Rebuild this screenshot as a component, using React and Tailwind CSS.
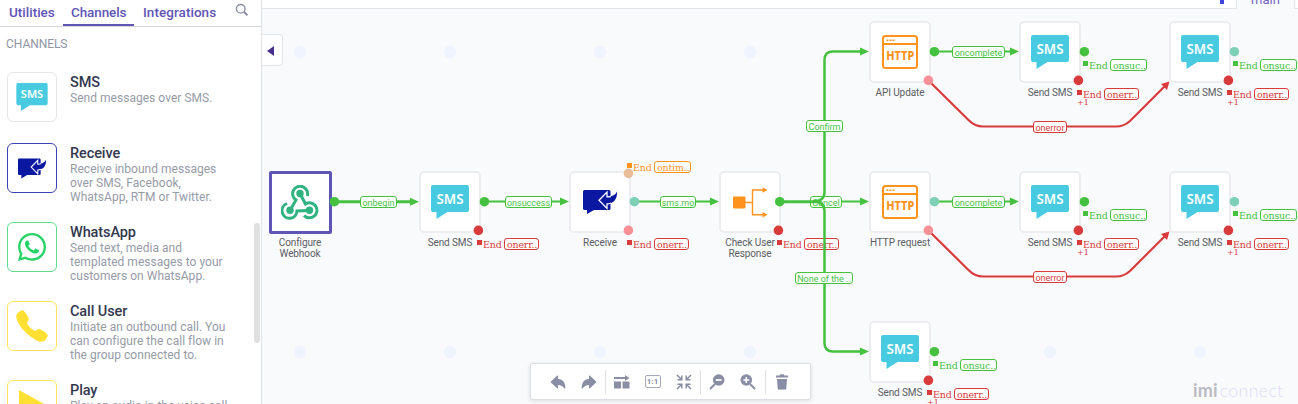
import React from "react";
import { FaWhatsapp } from "react-icons/fa";
import { IoCall, IoArrowUndo, IoArrowRedo } from "react-icons/io5";

const OX = 262;
const GREEN = "#45c13f";
const RED = "#d93a3c";

function SmsIcon({ className }) {
  return (
    <svg viewBox="0 0 38 34" className={className}>
      <path d="M2 0H36a2 2 0 0 1 2 2V25a2 2 0 0 1-2 2H16.500L5.500 34V27H2a2 2 0 0 1-2-2V2a2 2 0 0 1 2-2z" fill="#48cbe1" />
      <text x="19" y="18.700" textAnchor="middle" fontFamily="'Noto Sans', sans-serif" fontWeight="600" fontSize="14" textLength="27" lengthAdjust="spacingAndGlyphs" fill="#fff">SMS</text>
    </svg>
  );
}

function ReceiveIcon({ className }) {
  return (
    <svg viewBox="0 0 34 24" className={className}>
      <path d="M1.500 0H26a1.500 1.500 0 0 1 1.500 1.500V18.500a1.500 1.500 0 0 1-1.500 1.500H11L4 24V20H1.500A1.500 1.500 0 0 1 0 18.500V1.500A1.500 1.500 0 0 1 1.500 0z" fill="#0a17a0" />
      <path d="M16 10.300L24 2V6.800C28.500 6.800 32.500 5.300 34 1.500C34.500 9 30.500 13.500 24 14V18.500Z" fill="#0a17a0" />
      <path d="M28 6.300Q26 6.900 24 6.800V2L16 10.300L24 18.500V14Q26 13.900 28 13" fill="none" stroke="#fff" strokeWidth="1.300" />
    </svg>
  );
}

function HttpIcon() {
  return (
    <svg viewBox="0 0 36 34" className="h-[34px] w-[36px]">
      <rect x="1" y="1" width="34" height="32" rx="2.500" fill="#fff" stroke="#ff931e" strokeWidth="2" />
      <path d="M1 9H35" stroke="#ff931e" strokeWidth="2" />
      <path d="M4.500 5.200h2M7.500 5.200h2M10.500 5.200h2" stroke="#ff931e" strokeWidth="1.500" />
      <text x="18.200" y="25.200" textAnchor="middle" fontFamily="'Noto Sans', sans-serif" fontWeight="800" fontSize="11.500" textLength="28" lengthAdjust="spacingAndGlyphs" fill="#ff931e">HTTP</text>
    </svg>
  );
}

function BranchIcon() {
  return (
    <svg viewBox="0 0 35 31" className="h-[31px] w-[35px]">
      <rect x="0" y="9.500" width="12.500" height="12" rx="1" fill="#ff931e" />
      <path d="M12 15.500H19.500M31 3H19.500V27.700H31" fill="none" stroke="#ff931e" strokeWidth="1.400" />
      <path d="M29.500 0.300L34.500 3L29.500 5.700zM29.500 25L34.500 27.700L29.500 30.400z" fill="#ff931e" />
    </svg>
  );
}

function WebhookIcon() {
  return (
    <svg viewBox="281 185 38 35" className="h-[35px] w-[38px]" fill="none" stroke="#2fb380" strokeWidth="3">
      <circle cx="300" cy="193.500" r="3.700" fill="#2fb380" stroke="none" />
      <circle cx="290" cy="210.300" r="3.700" fill="#2fb380" stroke="none" />
      <circle cx="309.500" cy="210.300" r="3.700" fill="#2fb380" stroke="none" />
      <path d="M307.300 196A7.500 7.500 0 1 0 296 200L290.500 209.500" />
      <path d="M300 193.500L305.500 204A7.500 7.500 0 1 1 304 215.500" />
      <path d="M287 203.600A7.500 7.500 0 1 0 297 211L309 210.500" />
    </svg>
  );
}

const CHANNELS = [
  { title: "SMS", lines: ["Send messages over SMS."], border: "border-[#e6e6ea]", h: "h-[71px]", icon: <SmsIcon className="h-[28px] w-[32px]" /> },
  { title: "Receive", lines: ["Receive inbound messages", "over SMS, Facebook,", "WhatsApp, RTM or Twitter."], border: "border-[#3a44b4]", h: "h-[79px]", icon: <ReceiveIcon className="h-[21px] w-[28px]" /> },
  { title: "WhatsApp", lines: ["Send text, media and", "templated messages to your", "customers on WhatsApp."], border: "border-[#5fdc8b]", h: "h-[79px]", icon: <FaWhatsapp className="size-[32px] text-[#25d366]" /> },
  { title: "Call User", lines: ["Initiate an outbound call. You", "can configure the call flow in", "the group connected to."], border: "border-[#ffe45c]", h: "h-[79px]", icon: <IoCall className="size-[36px] text-[#ffe033]" /> },
  { title: "Play", lines: ["Play an audio in the voice call"], border: "border-[#ffe45c]", h: "h-[79px]", icon: <svg viewBox="0 0 27 30" className="h-[30px] w-[27px]"><path d="M0 0L27 15L0 30z" fill="#ffe033" /></svg> },
];

function Sidebar() {
  return (
    <aside className="relative flex h-[404px] w-[262px] shrink-0 flex-col overflow-hidden border-r border-[#e1e2e8] bg-white">
      <div className="flex h-[27px] shrink-0 border-b border-[#d5d6dc] text-[13.500px] leading-[25px] font-medium text-[#5f55b5]">
        <span className="w-[63px] pl-[9px]">Utilities</span>
        <span className="w-[71px] border-b-2 border-[#5f55b5] pl-[8px] tracking-[-0.100px]">Channels</span>
        <span className="w-[101px] pl-[9px] tracking-[0.050px]">Integrations</span>
        <svg viewBox="0 0 14 14" className="mt-[3px] size-[14px]" fill="none" stroke="#8a8ea5">
          <circle cx="5.700" cy="5.800" r="4.300" strokeWidth="1.400" />
          <path d="M9 9L12.500 12.300" strokeWidth="2" />
        </svg>
      </div>
      <div className="mt-[9px] h-[36px] shrink-0 pl-[6px] text-[12px] leading-[17px] tracking-[-0.050px] text-[#9195a3]">CHANNELS</div>
      {CHANNELS.map((c) => (
        <div key={c.title} className={`flex shrink-0 pl-[7px] ${c.h}`}>
          <div className={`flex size-[50px] shrink-0 items-center justify-center rounded-[6px] border ${c.border}`}>{c.icon}</div>
          <div className="ml-[13px] whitespace-nowrap">
            <div className="h-[19px] text-[14.500px] leading-[22px] font-medium tracking-[-0.100px] text-[#343850]">{c.title}</div>
            {c.lines.map((l) => (
              <div key={l} className="text-[12px] leading-[14px] tracking-[0.030px] text-[#979ba8]">{l}</div>
            ))}
          </div>
        </div>
      ))}
      <div className="absolute top-[223px] left-[254px] h-[120px] w-[6px] rounded-full bg-[#e0e0e0]" />
    </aside>
  );
}

const ICONS = {
  sms: <SmsIcon className="h-[34px] w-[38px]" />,
  receive: <ReceiveIcon className="h-[24px] w-[34px]" />,
  http: <HttpIcon />,
  branch: <BranchIcon />,
  hook: <WebhookIcon />,
};

const NODES = [
  { x: 300, y: 202, icon: "hook", label: ["Configure", "Webhook"], selected: true },
  { x: 450, y: 202, icon: "sms", label: ["Send SMS"] },
  { x: 600, y: 202, icon: "receive", label: ["Receive"] },
  { x: 750, y: 202, icon: "branch", label: ["Check User", "Response"] },
  { x: 900, y: 52, icon: "http", label: ["API Update"] },
  { x: 900, y: 202, icon: "http", label: ["HTTP request"] },
  { x: 900, y: 352, icon: "sms", label: ["Send SMS"] },
  { x: 1050, y: 52, icon: "sms", label: ["Send SMS"] },
  { x: 1200, y: 52, icon: "sms", label: ["Send SMS"] },
  { x: 1050, y: 202, icon: "sms", label: ["Send SMS"] },
  { x: 1200, y: 202, icon: "sms", label: ["Send SMS"] },
];

const DOTS = [
  [334.4, 201.700, GREEN], [484.4, 201.700, GREEN], [478.4, 230.400, RED],
  [628.4, 173.400, "#e8bd98"], [634.4, 201.700, "#7dd0b6"], [628.4, 230.400, "#fb9196"],
  [779.7, 201.700, GREEN], [778.4, 230.400, RED],
  [934.4, 51.700, GREEN], [928.4, 80.400, "#fb9196"],
  [934.4, 201.700, "#7dd0b6"], [928.4, 230.400, "#fb9196"],
  [934.4, 351.700, GREEN], [928.4, 380.400, RED],
  [1084.4, 51.700, GREEN], [1078.4, 80.400, RED], [1234.4, 51.700, "#7dd0b6"], [1228.4, 80.400, RED],
  [1084.4, 201.700, GREEN], [1078.4, 230.400, RED], [1234.4, 201.700, "#7dd0b6"], [1228.4, 230.400, RED],
];

const ENDS = [
  [477, 238, "red"], [627, 161, "orange"], [627, 238, "red"], [777, 238, "red"],
  [1083, 59, "green"], [1077, 88, "red", true], [1233, 59, "green"], [1227, 88, "red", true],
  [1083, 209, "green"], [1077, 238, "red", true], [1233, 209, "green"], [1227, 238, "red", true],
  [933, 359, "green"], [927, 388, "red", true],
];

const END_STYLE = {
  red: { text: "text-[#d93a3c]", fill: "bg-[#d93a3c]", pill: "w-[35px] border-[#d93a3c]", label: "onerr.." },
  green: { text: "text-[#45c13f]", fill: "bg-[#45c13f]", pill: "w-[37px] border-[#45c13f]", label: "onsuc.." },
  orange: { text: "text-[#ff931e]", fill: "bg-[#ff931e]", pill: "w-[37px] border-[#ff931e]", label: "ontim.." },
};

function EndTag({ x, y, kind, more }) {
  const s = END_STYLE[kind];
  return (
    <div className={`absolute flex h-[12px] font-['DejaVu_Serif',serif] text-[9.500px] leading-[12px] whitespace-nowrap ${s.text}`} style={{ left: x - OX, top: y }}>
      <span className={`mt-[2px] size-[5px] shrink-0 ${s.fill}`} />
      <span className="mt-px ml-px w-[21px] shrink-0 leading-[11px] tracking-[-0.200px]">End</span>
      <span className={`h-[12px] shrink-0 rounded-[3px] border bg-white pl-[2px] leading-[11px] tracking-[-0.200px] ${s.pill}`}>{s.label}</span>
      {more && <span className="absolute top-[10px] left-0 text-[8px] leading-[9px]">+1</span>}
    </div>
  );
}

const LABELS = [
  [360, 196, 37, "onbegin"], [505, 196, 47, "onsuccess"], [660, 196, 36, "sms.mo"],
  [806, 120, 37, "Confirm"], [795, 272, 58, "None of the .."],
  [952, 46, 53, "oncomplete"], [952, 196, 53, "oncomplete"],
  [1033, 121, 34, "onerror", true], [1033, 271, 34, "onerror", true],
];

function EdgeLabel({ x, y, w, text, error }) {
  return (
    <div
      className={`absolute flex h-[12px] justify-center rounded-[3px] border bg-white text-[9px] leading-[12px] whitespace-nowrap ${error ? "border-[#d93a3c] text-[#d93a3c]" : "border-[#45c13f] text-[#45c13f]"}`}
      style={{ left: x - OX, top: y, width: w }}
    >
      {text}
    </div>
  );
}

function Arrow({ x, y }) {
  return <path d={`M${x - 9} ${y - 4}L${x} ${y}L${x - 9} ${y + 4}z`} fill={GREEN} />;
}

function ErrorEdge({ dy }) {
  return (
    <g transform={`translate(0 ${dy})`}>
      <path d="M929 81L969 120.500Q975 126.500 983 126.500H1116Q1124 126.500 1130 121L1165 86" fill="none" stroke={RED} strokeWidth="2.200" />
      <path d="M1169.500 81.500L1167 90L1161 84z" fill={RED} />
    </g>
  );
}

function Layer({ children }) {
  return <svg viewBox="262 0 1036 404" className="pointer-events-none absolute inset-0 h-[404px] w-[1036px]">{children}</svg>;
}

function NodeCard({ n }) {
  return (
    <div className="absolute flex w-[76px] flex-col items-center" style={{ left: n.x - OX - 38, top: n.y - 31 }}>
      {n.selected ? (
        <div className="flex size-[63px] items-center justify-center rounded-[2px] border-3 border-[#5f55b5] bg-white">{ICONS[n.icon]}</div>
      ) : (
        <div className="flex size-[62px] items-center justify-center rounded-[5px] border-2 border-[#ededf0] bg-white">{ICONS[n.icon]}</div>
      )}
      <div className="absolute top-[66px] text-center text-[10px] leading-[11px] tracking-[-0.100px] whitespace-nowrap text-[#5b5d63]">
        {n.label.map((l) => <div key={l}>{l}</div>)}
      </div>
    </div>
  );
}

function Toolbar() {
  const sep = <span className="ml-px h-[24px] w-px bg-[#dfe0e6]" />;
  const cell = "flex w-[31px] justify-center";
  return (
    <div className="absolute top-[363px] left-[268px] flex h-[37px] w-[281px] items-center rounded-[2px] border border-[#dedfe5] bg-white pl-[11px] text-[#8a8ea5] shadow-[0_1px_4px_rgba(0,0,0,0.12)]">
      <span className={cell}><IoArrowUndo className="size-[18px]" /></span>
      <span className={cell}><IoArrowRedo className="size-[18px]" /></span>
      {sep}
      <span className={cell}>
        <svg viewBox="0 0 16 14" className="h-[14px] w-[16px]" fill="currentColor"><path d="M0 2.100H11V0L15.500 3L11 6V3.900H0zM0 6.500H7V13.500H0zM8.500 6.500H15.500V13.500H8.500z" /></svg>
      </span>
      <span className={cell}>
        <span className="h-[13px] w-[16px] rounded-[2px] border border-[#a5a8ba] text-center text-[8px] leading-[11px] font-bold">1:1</span>
      </span>
      <span className={cell}>
        <svg viewBox="0 0 16 16" className="size-[16px]" fill="none" stroke="currentColor" strokeWidth="1.500">
          <path d="M1 1L5.500 5.500M1.500 5.800H5.800V1.500M15 1L10.500 5.500M14.500 5.800H10.200V1.500M1 15L5.500 10.500M1.500 10.200H5.800V14.500M15 15L10.500 10.500M14.500 10.200H10.200V14.500" />
        </svg>
      </span>
      {sep}
      <span className={cell}>
        <svg viewBox="0 0 16 16" className="size-[16px]"><circle cx="9.700" cy="6" r="5.800" fill="currentColor" /><path d="M6 10L1 15" stroke="currentColor" strokeWidth="2" /><path d="M6.800 6H12.600" stroke="#fff" strokeWidth="1.700" /></svg>
      </span>
      <span className={cell}>
        <svg viewBox="0 0 16 16" className="size-[16px]"><circle cx="6.300" cy="6" r="5.800" fill="currentColor" /><path d="M10 10L15 15" stroke="currentColor" strokeWidth="2" /><path d="M3.400 6H9.200M6.300 3.100V8.900" stroke="#fff" strokeWidth="1.500" /></svg>
      </span>
      <span className="w-px" />
      {sep}
      <span className={cell}>
        <svg viewBox="0 0 14 16" className="h-[16px] w-[14px]" fill="currentColor"><path d="M1 1.500H4.500L5.500 0.300H8.500L9.500 1.500H13V3.500H1zM2 5H12L11.200 15.500H2.800z" /></svg>
      </span>
    </div>
  );
}

function Canvas() {
  return (
    <main className="relative h-[404px] flex-1 overflow-hidden bg-[#f9fafc]">
      <div className="flex h-[9px] text-[13px] text-[#7468c0]">
        <div className="flex-1 border-b border-[#e4e5e9] bg-white">
          <div className="ml-[958px] h-[4px] w-[4px] bg-[#3a46dd]" />
        </div>
        <div className="h-[9px] w-[59px] border-x border-[#e4e5e9] text-center leading-[0px]">main</div>
        <div className="w-[3px] border-b border-[#e4e5e9] bg-white" />
      </div>
      <Layer>
        {[52, 352].map((y) => [300, 450, 600, 750, 900, 1050, 1200].map((x) => <circle key={`${x}-${y}`} cx={x} cy={y} r="6.300" fill="#f0f4fe" />))}
      </Layer>
      <div className="absolute top-[34px] left-[-1px] flex h-[32px] w-[22px] items-center rounded-r-[4px] border border-l-0 border-[#e4e5e9] bg-white">
        <svg viewBox="0 0 7 10" className="mt-px ml-[6px] h-[10px] w-[7px]"><path d="M7 0V10L0 5z" fill="#472f8a" /></svg>
      </div>
      {NODES.map((n) => <NodeCard key={`${n.x}-${n.y}`} n={n} />)}
      {ENDS.map(([x, y, kind, more]) => <EndTag key={`${x}-${y}`} x={x} y={y} kind={kind} more={more} />)}
      <Layer>
        <path d="M820 201.500H862" stroke={GREEN} strokeWidth="2" />
      </Layer>
      <EdgeLabel x={810} y={196} w={32} text="Cancel" />
      <Layer>
        <g fill="none" stroke={GREEN} strokeWidth="2">
          <path d="M334 201.700H412" strokeWidth="3" />
          <path d="M484 201.500H562M634 201.500H712M934 51.500H1012M934 201.500H1012" />
          <path d="M780 201.700H820" strokeWidth="3" />
          <path d="M813 201.500Q824.500 201.500 824.500 192V60Q824.500 51.500 833 51.500H862" strokeWidth="2.500" />
          <path d="M813 201.500Q824.500 201.500 824.500 211V343Q824.500 351.500 833 351.500H862" strokeWidth="2.500" />
        </g>
        {[[419, 201.7], [569, 201.5], [719, 201.5], [869, 51.5], [869, 201.5], [869, 351.5], [1019, 51.5], [1019, 201.5]].map(([x, y]) => <Arrow key={`${x}-${y}`} x={x} y={y} />)}
        <ErrorEdge dy={0} />
        <ErrorEdge dy={150} />
        {DOTS.map(([x, y, c]) => <circle key={`${x}-${y}`} cx={x} cy={y} r="4.800" fill={c} />)}
      </Layer>
      {LABELS.map(([x, y, w, text, error]) => <EdgeLabel key={`${x}-${y}`} x={x} y={y} w={w} text={text} error={error} />)}
      <Toolbar />
      <div className="absolute top-[380px] left-[931px] flex items-baseline font-['Lato',sans-serif] leading-[20px] whitespace-nowrap">
        <span className="text-[18px] font-bold tracking-[0.200px] text-[#b9bac3]">imi</span>
        <span className="ml-[2px] text-[18px] font-light tracking-[0.200px] text-[#e2daf8]">connect</span>
      </div>
    </main>
  );
}

export default function App() {
  return (
    <div className="flex h-[404px] w-[1298px] overflow-hidden bg-white font-['Roboto',sans-serif]">
      <Sidebar />
      <Canvas />
    </div>
  );
}
